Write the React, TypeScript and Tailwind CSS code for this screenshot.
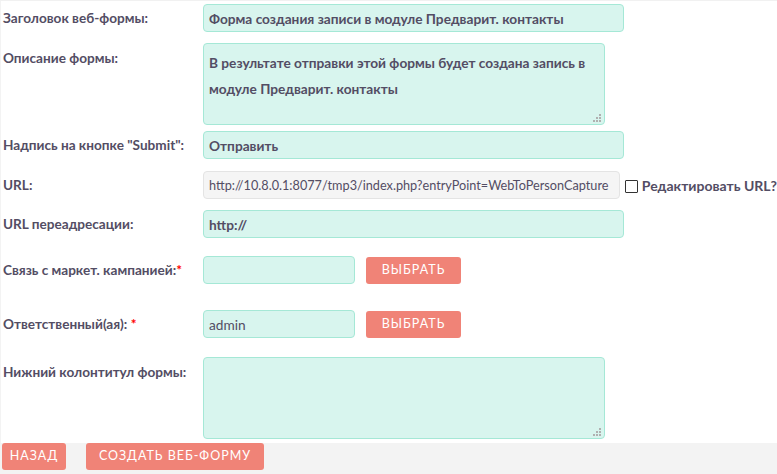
import React from "react";

const inputCls =
  "h-[28px] rounded-[4px] border border-[#a5e8d6] bg-[#d8f5ee] px-[5px] text-[13.7px] text-[#534d64] outline-none";

function Grip() {
  const cells = [
    [6, 0],
    [3, 3],
    [6, 3],
    [0, 6],
    [3, 6],
    [6, 6],
  ];
  return (
    <svg className="absolute right-[4px] bottom-[3px]" width="8" height="8" viewBox="0 0 8 8">
      {cells.map(([x, y], i) => (
        <rect key={i} x={x} y={y} width="2" height="2" fill="#b0b0b0" />
      ))}
    </svg>
  );
}

function Label({ children, pt = "pt-[6px]" }: { children: React.ReactNode; pt?: string }) {
  return (
    <div className={`w-[200px] shrink-0 text-[13.6px] leading-4 font-bold text-[#534d64] ${pt}`}>{children}</div>
  );
}

function SelectBtn() {
  return (
    <button className="ml-[11px] mt-[1px] h-[27px] w-[95px] rounded-[3px] bg-[#f08377] text-[12.5px] tracking-[1px] text-white">
      ВЫБРАТЬ
    </button>
  );
}

export default function App() {
  return (
    <div
      className="w-[777px] h-[474px] bg-white border-t border-[#f1f1f1] overflow-hidden flex flex-col"
      style={{ fontFamily: "Lato, 'Open Sans', sans-serif" }}
    >
      <div className="flex-1 pl-[2px] border-l border-[#f3f3f3]">
        {/* Row 1 */}
        <div className="flex mt-[3px]">
          <Label>Заголовок веб-формы:</Label>
          <input
            readOnly
            className={`${inputCls} w-[421px] font-bold`}
            value="Форма создания записи в модуле Предварит. контакты"
          />
        </div>
        {/* Row 2 */}
        <div className="flex mt-[11px]">
          <Label pt="pt-[7px]">Описание формы:</Label>
          <div className="relative">
            <textarea
              readOnly
              className="block h-[82px] w-[402px] resize-none rounded-[4px] border border-[#a5e8d6] bg-[#d8f5ee] px-[5px] pt-[6px] text-[13.7px] leading-[26px] font-bold text-[#534d64] outline-none"
              value="В результате отправки этой формы будет создана запись в модуле Предварит. контакты"
            />
            <Grip />
          </div>
        </div>
        {/* Row 3 */}
        <div className="flex mt-[6px]">
          <Label>Надпись на кнопке "Submit":</Label>
          <input readOnly className={`${inputCls} w-[421px] font-bold`} value="Отправить" />
        </div>
        {/* Row 4 */}
        <div className="flex mt-[12px] items-start">
          <Label>URL:</Label>
          <input
            readOnly
            className="h-[28px] w-[421px] rounded-[4px] border border-[#e4e4e4] bg-[#f5f5f5] px-[5px] text-[12.7px] text-[#534d64] outline-none"
            value="http://10.8.0.1:8077/tmp3/index.php?entryPoint=WebToPersonCapture"
          />
          <div className="flex items-center ml-[5px] mt-[7px]">
            <span className="block w-[13px] h-[13px] border border-[#333] bg-white rounded-[1px]" />
            <span className="ml-[4px] text-[14px] leading-4 font-bold text-[#534d64] whitespace-nowrap">
              Редактировать URL?
            </span>
          </div>
        </div>
        {/* Row 5 */}
        <div className="flex mt-[11px]">
          <Label>URL переадресации:</Label>
          <input readOnly className={`${inputCls} w-[421px] font-bold`} value="http://" />
        </div>
        {/* Row 6 */}
        <div className="flex mt-[18px]">
          <Label>
            Связь с маркет. кампанией:<span className="text-[#ff0000]">*</span>
          </Label>
          <input readOnly className={`${inputCls} w-[152px]`} value="" />
          <SelectBtn />
        </div>
        {/* Row 7 */}
        <div className="flex mt-[26px]">
          <Label>
            Ответственный(ая): <span className="text-[#ff0000]">*</span>
          </Label>
          <input readOnly className={`${inputCls} w-[152px]`} value="admin" />
          <SelectBtn />
        </div>
        {/* Row 8 */}
        <div className="flex mt-[19px]">
          <Label pt="pt-[7px]">Нижний колонтитул формы:</Label>
          <div className="relative">
            <textarea
              readOnly
              className="block h-[82px] w-[402px] resize-none rounded-[4px] border border-[#a5e8d6] bg-[#d8f5ee] outline-none"
              value=""
            />
            <Grip />
          </div>
        </div>
      </div>
      <div className="h-[31px] bg-[#f3f3f3] flex items-start pl-[2px]">
        <button className="h-[27px] w-[64px] rounded-[3px] bg-[#f08377] text-[12.5px] tracking-[1px] text-white">
          НАЗАД
        </button>
        <button className="ml-[20px] h-[27px] w-[178px] rounded-[3px] bg-[#f08377] text-[12.5px] tracking-[1px] text-white">
          СОЗДАТЬ ВЕБ-ФОРМУ
        </button>
      </div>
    </div>
  );
}
